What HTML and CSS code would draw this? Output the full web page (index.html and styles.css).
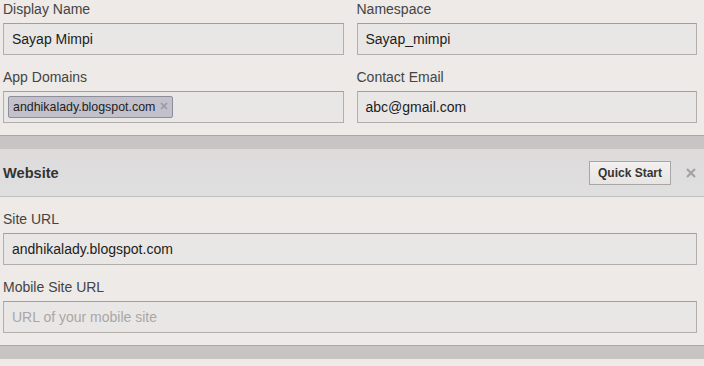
FILE: index.html
```html
<!DOCTYPE html>
<html>
<head>
<meta charset="utf-8">
<link rel="stylesheet" href="styles.css">
</head>
<body>
<div class="page">
  <div class="grid">
    <div class="field">
      <div class="label">Display Name</div>
      <div class="input">Sayap Mimpi</div>
    </div>
    <div class="field">
      <div class="label">Namespace</div>
      <div class="input">Sayap_mimpi</div>
    </div>
    <div class="field">
      <div class="label">App Domains</div>
      <div class="input tokens">
        <span class="token">andhikalady.blogspot.com<svg class="token-x" width="8" height="8" viewBox="0 0 8 8"><path d="M1 1L7 7M7 1L1 7" stroke="#9a99a3" stroke-width="1.6"/></svg></span>
      </div>
    </div>
    <div class="field">
      <div class="label">Contact Email</div>
      <div class="input">abc@gmail.com</div>
    </div>
  </div>
</div>
<div class="band"></div>
<div class="section-head">
  <div class="section-title">Website</div>
  <div class="head-actions">
    <button class="btn">Quick Start</button>
    <svg class="close" width="12" height="12" viewBox="0 0 12 12"><path d="M2 2L10 10M10 2L2 10" stroke="#a4a2a2" stroke-width="2.2"/></svg>
  </div>
</div>
<div class="page">
  <div class="field">
    <div class="label">Site URL</div>
    <div class="input">andhikalady.blogspot.com</div>
  </div>
  <div class="field last">
    <div class="label">Mobile Site URL</div>
    <div class="input placeholder">URL of your mobile site</div>
  </div>
</div>
<div class="band"></div>
</body>
</html>
```

FILE: styles.css
```css
html, body {
  margin: 0;
  padding: 0;
  background: #edeae7;
  font-family: "Liberation Sans", Arial, sans-serif;
  color: #222;
  overflow: hidden;
}
.page {
  padding: 0 7px 0 3px;
}
.grid {
  display: grid;
  grid-template-columns: 1fr 1fr;
  column-gap: 13px;
}
.field {
  display: flex;
  flex-direction: column;
  margin-bottom: 13px;
}
.grid .field:nth-child(n+3),
.field.last {
  margin-bottom: 12px;
}
.label {
  font-size: 14px;
  line-height: 18px;
  color: #444;
  margin-bottom: 5px;
}
.input {
  box-sizing: border-box;
  height: 32px;
  border: 1px solid #b2aeac;
  border-top-color: #a39f9e;
  background: #e9e7e5;
  padding: 0 8px;
  font-size: 14px;
  line-height: 30px;
  color: #1c1c1c;
  white-space: nowrap;
}
.input.placeholder {
  color: #a9a6a5;
}
.input.tokens {
  padding: 4px 4px;
  display: flex;
  align-items: flex-start;
}
.token {
  box-sizing: border-box;
  height: 22px;
  display: inline-flex;
  align-items: center;
  gap: 5px;
  padding: 0 4px 0 4px;
  border: 1px solid #8e8d9a;
  border-radius: 2px;
  background: #c2c1cb;
  font-size: 12.4px;
  color: #222;
}
.token-x {
  display: block;
  margin-top: -3px;
}
.band {
  height: 13px;
  background: #c8c4c4;
  border-top: 1px solid #aca7a7;
}
.section-head {
  box-sizing: border-box;
  height: 48px;
  display: flex;
  align-items: center;
  justify-content: space-between;
  padding: 0 7px 0 3px;
  background: linear-gradient(#dddbdc, #e0dfdf);
  border-bottom: 1px solid #c3bfbe;
  margin-bottom: 13px;
}
.section-title {
  font-weight: bold;
  font-size: 14.6px;
  color: #333;
}
.head-actions {
  display: flex;
  align-items: center;
  gap: 14px;
}
.btn {
  box-sizing: border-box;
  height: 24px;
  padding: 0 8px;
  border: 1px solid #aaa6a5;
  background: linear-gradient(#f3f1f0, #e7e5e4);
  font-family: "Liberation Sans", Arial, sans-serif;
  font-weight: bold;
  font-size: 12px;
  color: #333;
  margin-top: 1px;
}
.close {
  display: block;
}
```
